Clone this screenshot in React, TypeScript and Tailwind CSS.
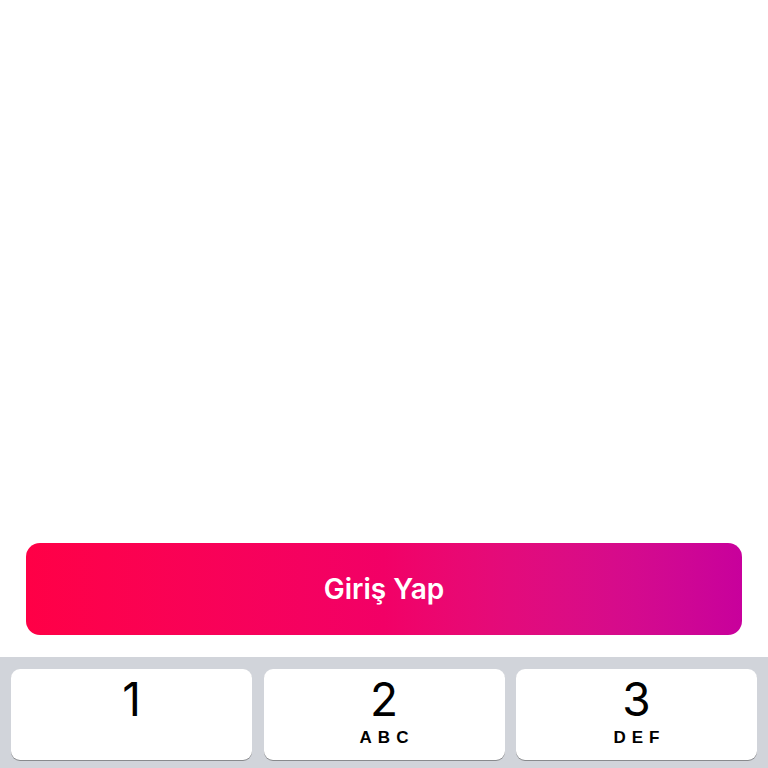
import React from "react";

const keys = [
  { digit: "1", letters: "" },
  { digit: "2", letters: "ABC" },
  { digit: "3", letters: "DEF" },
];

const App: React.FC = () => {
  return (
    <div className="flex h-[768px] w-full flex-col overflow-hidden bg-white font-['Inter','Liberation_Sans',sans-serif]">
      <div className="flex-1" />

      <div className="px-[26px] pb-[22px]">
        <button className="flex h-[92px] w-full items-center justify-center rounded-[14px] bg-linear-to-r from-[#ff0046] via-[#f20066] to-[#c8009c] text-[28px] font-semibold text-white">
          Giriş Yap
        </button>
      </div>

      <div className="h-[111px] bg-[#d1d4da] px-[11px] pt-[12px]">
        <div className="grid grid-cols-3 gap-x-[11.5px]">
          {keys.map((k) => (
            <div
              key={k.digit}
              className="flex h-[91px] flex-col items-center rounded-[9px] bg-white pt-[6px] shadow-[0_1px_0_#898a8d]"
            >
              <span className="text-[46px] leading-[48px] font-normal text-black">
                {k.digit}
              </span>
              {k.letters && (
                <span className="mt-[5px] pl-[6px] font-['Liberation_Sans',sans-serif] text-[17px] leading-[20px] font-bold tracking-[6px] text-black">
                  {k.letters}
                </span>
              )}
            </div>
          ))}
        </div>
      </div>
    </div>
  );
};

export default App;
